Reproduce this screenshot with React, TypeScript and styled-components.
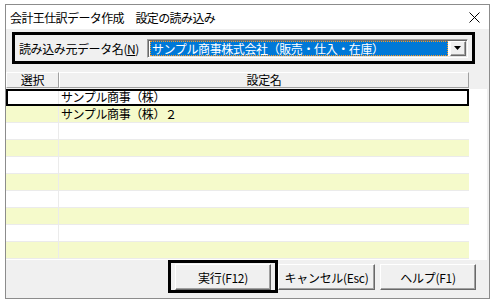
import React from "react";
import styled, { createGlobalStyle } from "styled-components";

const GlobalStyle = createGlobalStyle`
  body {
    margin: 0;
    background: #ffffff;
    font-family: "MS UI Gothic", "Noto Sans CJK JP", sans-serif;
    font-size: 12px;
    color: #000000;
  }
  * {
    box-sizing: border-box;
  }
`;

const Page = styled.div({
  padding: "4px 0 0 5px",
});

const Dialog = styled.div({
  width: "485px",
  height: "295px",
  border: "1px solid #8c8c8c",
  display: "flex",
  flexDirection: "column",
  background: "#f0f0f0",
});

const TitleBar = styled.div({
  height: "24px",
  background: "#ffffff",
  display: "flex",
  alignItems: "center",
  justifyContent: "space-between",
  padding: "0 9px 0 4px",
  fontSize: "12px",
  letterSpacing: "-0.6px",
});

const CloseIcon = styled.svg({
  width: "11px",
  height: "11px",
  display: "block",
});

const Body = styled.div({
  flex: 1,
  display: "flex",
  flexDirection: "column",
});

const SourceGroup = styled.div({
  margin: "3px 14px 0 6px",
  height: "32px",
  border: "3px solid #000000",
  display: "flex",
  alignItems: "center",
  padding: "0 4px 0 4px",
  gap: "6px",
});

const FieldLabel = styled.label({
  whiteSpace: "nowrap",
  width: "122px",
  letterSpacing: "-0.4px",
  "& u": {
    textUnderlineOffset: "1px",
  },
});

const Combo = styled.div({
  flex: 1,
  height: "19px",
  display: "flex",
  alignItems: "stretch",
  background: "#ffffff",
  borderTop: "1px solid #a0a0a0",
  borderLeft: "1px solid #a0a0a0",
  borderRight: "1px solid #ffffff",
  borderBottom: "1px solid #ffffff",
  boxShadow: "inset 1px 1px 0 #696969, inset -1px -1px 0 #e3e3e3",
  padding: "1px 1px 1px 2px",
});

const ComboValue = styled.div({
  flex: 1,
  background: "#0078d7",
  color: "#ffffff",
  border: "1px dotted #ff9a1f",
  display: "flex",
  alignItems: "center",
  paddingLeft: "1px",
  whiteSpace: "nowrap",
  fontSize: "12px",
  letterSpacing: "-0.4px",
  lineHeight: "13px",
});

const ComboButton = styled.div({
  width: "16px",
  marginLeft: "2px",
  background: "#f0f0f0",
  borderTop: "1px solid #ffffff",
  borderLeft: "1px solid #ffffff",
  borderRight: "1px solid #696969",
  borderBottom: "1px solid #696969",
  boxShadow: "inset -1px -1px 0 #a0a0a0",
  display: "flex",
  alignItems: "center",
  justifyContent: "center",
});

const Grid = styled.div({
  margin: "8px 2px 0 0",
  height: "188px",
  background: "#ffffff",
  display: "flex",
  flexDirection: "column",
});

const HeaderRow = styled.div({
  height: "17px",
  background: "#f0f0f0",
  display: "flex",
});

const HeaderCell = styled.div<{ $w: number }>`
  width: ${(p) => p.$w}px;
  height: 16px;
  border-top: 1px solid #ffffff;
  border-left: 1px solid #ffffff;
  border-right: 1px solid #a0a0a0;
  border-bottom: 1px solid #a0a0a0;
  display: flex;
  align-items: center;
  justify-content: center;
  line-height: 12px;
  letter-spacing: -0.3px;
`;

const Row = styled.div<{ $alt: boolean; $selected: boolean }>`
  width: 463px;
  height: 17px;
  display: flex;
  background: ${(p) => (p.$alt ? "#f5facb" : "#ffffff")};
  border-bottom: 1px solid #ebebeb;
  ${(p) =>
    p.$selected
      ? "outline: 2px solid #000000; outline-offset: -2px; border-bottom-color: transparent;"
      : ""}
`;

const Cell = styled.div<{ $w?: number }>`
  ${(p) => (p.$w ? `width: ${p.$w}px; border-right: 1px solid #ebebeb;` : "flex: 1;")}
  display: flex;
  align-items: center;
  padding-left: ${(p) => (p.$w ? 0 : 2)}px;
  white-space: nowrap;
  letter-spacing: -0.4px;
  line-height: 14px;
`;

const ButtonBar = styled.div({
  flex: 1,
  display: "flex",
  justifyContent: "flex-end",
  alignItems: "flex-start",
  paddingRight: "13px",
});

const FocusFrame = styled.div({
  border: "3px solid #000000",
  padding: "1px 4px 1px 4px",
  height: "33px",
});

const DialogButton = styled.button<{ $w: number; $gap?: number }>`
  width: ${(p) => p.$w}px;
  height: 26px;
  margin-top: ${(p) => (p.$gap === undefined ? 4 : 0)}px;
  margin-left: ${(p) => p.$gap ?? 0}px;
  background: #f0f0f0;
  border-top: 1px solid #ffffff;
  border-left: 1px solid #ffffff;
  border-right: 1px solid #696969;
  border-bottom: 1px solid #696969;
  box-shadow: inset -1px -1px 0 #a0a0a0;
  font-family: "MS UI Gothic", "Noto Sans CJK JP", sans-serif;
  font-size: 12px;
  color: #000000;
  padding: 0;
  letter-spacing: -0.3px;
`;

const rows = [
  "サンプル商事（株）",
  "サンプル商事（株）２",
  "",
  "",
  "",
  "",
  "",
  "",
  "",
  "",
];

export default function App() {
  return (
    <>
      <GlobalStyle />
      <Page>
        <Dialog>
          <TitleBar>
            <span>会計王仕訳データ作成　設定の読み込み</span>
            <CloseIcon viewBox="0 0 11 11">
              <path d="M0.5 0.5 L10.5 10.5 M10.5 0.5 L0.5 10.5" stroke="#000" strokeWidth="1" />
            </CloseIcon>
          </TitleBar>
          <Body>
            <SourceGroup>
              <FieldLabel>
                読み込み元データ名(<u>N</u>)
              </FieldLabel>
              <Combo>
                <ComboValue>サンプル商事株式会社（販売・仕入・在庫）</ComboValue>
                <ComboButton>
                  <svg width="8" height="4" viewBox="0 0 8 4">
                    <path d="M0 0 H7 L3.5 4 Z" fill="#000" />
                  </svg>
                </ComboButton>
              </Combo>
            </SourceGroup>
            <Grid>
              <HeaderRow>
                <HeaderCell $w={53}>選択</HeaderCell>
                <HeaderCell $w={410}>設定名</HeaderCell>
              </HeaderRow>
              {rows.map((name, i) => (
                <Row key={i} $alt={i % 2 === 1} $selected={i === 0}>
                  <Cell $w={53} />
                  <Cell>{name}</Cell>
                </Row>
              ))}
            </Grid>
            <ButtonBar>
              <FocusFrame>
                <DialogButton $w={96} $gap={0}>実行(F12)</DialogButton>
              </FocusFrame>
              <DialogButton $w={97}>キャンセル(Esc)</DialogButton>
              <DialogButton $w={96} style={{ marginLeft: 5 }}>
                ヘルプ(F1)
              </DialogButton>
            </ButtonBar>
          </Body>
        </Dialog>
      </Page>
    </>
  );
}
